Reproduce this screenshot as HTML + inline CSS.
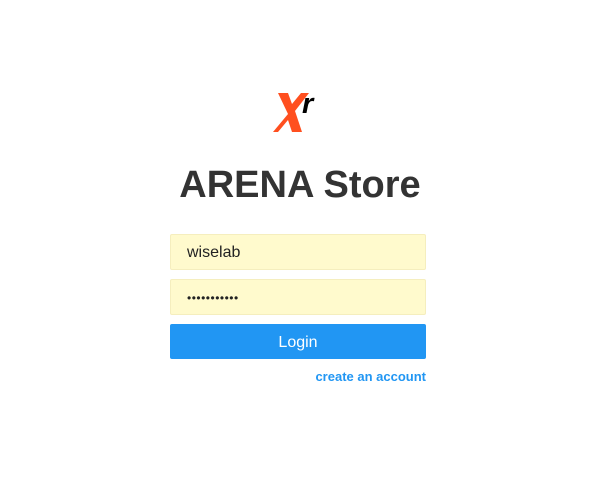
<!DOCTYPE html>
<html><head><style>
body{margin:0;width:600px;height:492px;background:#fff;font-family:"Liberation Sans",sans-serif;position:relative;overflow:hidden}
.t{position:absolute;left:0;width:600px;top:160px;text-align:center;font-size:38px;font-weight:bold;color:#333;line-height:50px}
.in{position:absolute;left:170px;width:254px;height:34px;background:#fffacd;border:1px solid #f5eebe;border-radius:2px;font-size:16px;color:#222;line-height:36px;box-sizing:content-box}
.in span{padding-left:16px}
.btn{position:absolute;left:170px;top:324px;width:256px;height:35px;background:#2196f3;border-radius:2px;color:#fff;text-align:center;line-height:37px;font-size:16px}
.lk{position:absolute;right:174px;top:369px;font-size:13px;color:#2196f3;font-weight:bold}
</style></head><body>
<svg style="position:absolute;left:270px;top:90px" width="52" height="46" viewBox="0 0 52 46">
<path d="M8 3h10l4 11 9-11h8L25 21l7 21H22l-4-12-10 12H3L18 24z" fill="#ff4f1f"/>
<text x="32" y="23" font-family="Liberation Sans" font-weight="bold" font-style="italic" font-size="29" fill="#000">r</text>
</svg>
<div class="t">ARENA Store</div>
<div class="in" style="top:234px"><span>wiselab</span></div>
<div class="in" style="top:279px"><span style="font-size:12px;letter-spacing:0.5px">•••••••••••</span></div>
<div class="btn">Login</div>
<div class="lk">create an account</div>
</body></html>
